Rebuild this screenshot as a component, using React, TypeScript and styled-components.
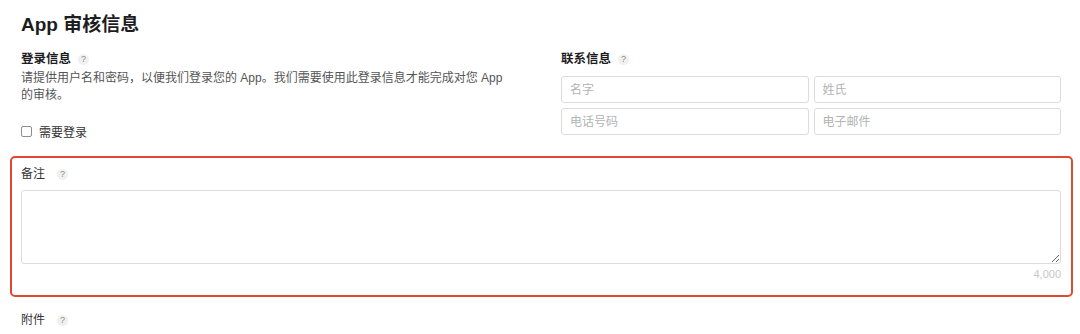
import React from 'react';
import styled, { createGlobalStyle } from 'styled-components';

const GlobalStyle = createGlobalStyle`
    body {
        margin: 0;
        background: #fff;
        font-family: "Liberation Sans", "Noto Sans CJK SC", sans-serif;
        color: #333;
    }
`;

const Page = styled.div`
    padding: 13px 19px 0 21px;
    height: 334px;
    box-sizing: border-box;
    overflow: hidden;
`;

const Title = styled.h1`
    margin: 0;
    font-size: 19px;
    line-height: 24px;
    font-weight: 700;
    color: #1d1d1f;
`;

// 위쪽 두 칸 (로그인 / 연락처)
const TopGrid = styled.div`
    display: grid;
    grid-template-columns: 1fr 1fr;
    column-gap: 40px;
    margin-top: 14px;
`;

const Column = styled.div`
    display: flex;
    flex-direction: column;
`;

const Label = styled.div<{ $bold?: boolean; $gap?: number }>`
    display: flex;
    align-items: center;
    gap: ${p => p.$gap ?? 7}px;
    font-size: ${p => (p.$bold ? 12.5 : 12)}px;
    line-height: 16px;
    font-weight: ${p => (p.$bold ? 700 : 400)};
    color: ${p => (p.$bold ? '#1d1d1f' : '#333')};
`;

const Help = styled.span`
    display: inline-flex;
    align-items: center;
    justify-content: center;
    width: 11px;
    height: 11px;
    border-radius: 50%;
    background: #f0f0f0;
    color: #8c8c8c;
    font-size: 9px;
    line-height: 11px;
    font-weight: 400;
`;

const Description = styled.p`
    margin: 3px 0 0;
    max-width: 495px;
    font-size: 12px;
    line-height: 17px;
    color: #555;
`;

const CheckRow = styled.label`
    display: flex;
    align-items: center;
    gap: 7px;
    margin-top: 19px;
    height: 16px;
    font-size: 12px;
    color: #333;
`;

const Check = styled.input`
    appearance: none;
    margin: 0;
    width: 11px;
    height: 11px;
    border: 1px solid #8e8e8e;
    border-radius: 2px;
    background: #fff;
    box-sizing: border-box;
`;

const InputGrid = styled.div`
    display: grid;
    grid-template-columns: 1fr 1fr;
    gap: 5px;
    margin-top: 9px;
`;

const TextInput = styled.input`
    height: 27px;
    box-sizing: border-box;
    border: 1px solid #dcdcdc;
    border-radius: 3px;
    padding: 0 8px;
    font-family: inherit;
    font-size: 12px;
    color: #333;
    outline: none;
    &::placeholder {
        color: #b3b3b3;
    }
`;

// 빨간 강조 박스
const Highlight = styled.section`
    margin: 17px -12px 0 -11px;
    padding: 8px 10px 14px 9px;
    border: 2px solid #e0482f;
    border-radius: 5px;
`;

const NoteArea = styled.textarea`
    display: block;
    width: 100%;
    height: 74px;
    margin-top: 8px;
    box-sizing: border-box;
    border: 1px solid #dcdcdc;
    border-radius: 3px;
    font-family: inherit;
    font-size: 12px;
    outline: none;
`;

const Counter = styled.div`
    margin-top: 3px;
    text-align: right;
    font-size: 11px;
    line-height: 14px;
    color: #c8c8c8;
`;

const Attachment = styled.div`
    margin-top: 15px;
`;

const App = () => (
    <>
        <GlobalStyle />
        <Page>
            <Title>App 审核信息</Title>
            <TopGrid>
                <Column>
                    <Label $bold>登录信息 <Help>?</Help></Label>
                    <Description>
                        请提供用户名和密码，以便我们登录您的 App。我们需要使用此登录信息才能完成对您 App 的审核。
                    </Description>
                    <CheckRow>
                        <Check type="checkbox" />
                        需要登录
                    </CheckRow>
                </Column>
                <Column>
                    <Label $bold>联系信息 <Help>?</Help></Label>
                    <InputGrid>
                        <TextInput placeholder="名字" />
                        <TextInput placeholder="姓氏" />
                        <TextInput placeholder="电话号码" />
                        <TextInput placeholder="电子邮件" />
                    </InputGrid>
                </Column>
            </TopGrid>
            <Highlight>
                <Label $gap={12}>备注 <Help>?</Help></Label>
                <NoteArea />
                <Counter>4,000</Counter>
            </Highlight>
            <Attachment>
                <Label $gap={12}>附件 <Help>?</Help></Label>
            </Attachment>
        </Page>
    </>
);

export default App;
